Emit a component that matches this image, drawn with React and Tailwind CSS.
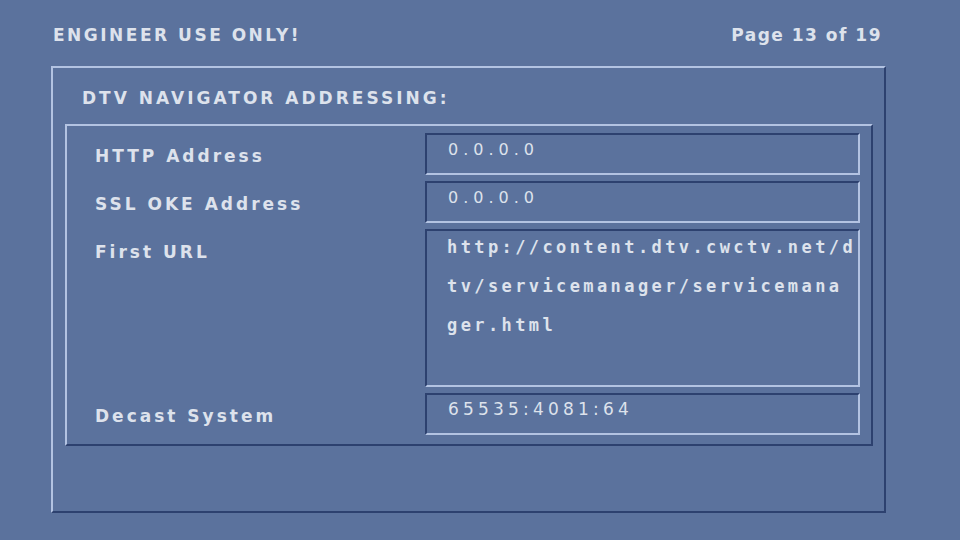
const FIELDS = [
  { label: "HTTP Address", lines: ["0.0.0.0"], kind: "ip" },
  { label: "SSL OKE Address", lines: ["0.0.0.0"], kind: "ip" },
  {
    label: "First URL",
    lines: [
      "http://content.dtv.cwctv.net/d",
      "tv/servicemanager/servicemana",
      "ger.html",
    ],
    kind: "url",
  },
  { label: "Decast System", lines: ["65535:4081:64"], kind: "num" },
];

const raised =
  "border-2 border-t-[#b3c3e2] border-l-[#b3c3e2] border-r-[#2d416f] border-b-[#2d416f]";
const sunken =
  "border-2 border-t-[#2d416f] border-l-[#2d416f] border-r-[#b3c3e2] border-b-[#b3c3e2]";

function FieldValue({ field }) {
  if (field.kind === "url") {
    return (
      <div className="pl-[20px] -mt-[3px] font-['DejaVu_Sans_Mono',monospace] font-bold text-[17px] tracking-[3.4px] leading-[39px]">
        {field.lines.map((line) => (
          <div key={line} className="whitespace-nowrap">
            {line}
          </div>
        ))}
      </div>
    );
  }

  const size =
    field.kind === "ip"
      ? "text-[16px] tracking-[5px] pt-[3px]"
      : "text-[17px] tracking-[4.2px] pt-[2px]";

  return <div className={`pl-[21px] leading-[24px] ${size}`}>{field.lines[0]}</div>;
}

export default function App() {
  return (
    <div className="w-[960px] h-[540px] bg-[#5b729d] text-[#dde2ec] font-['DejaVu_Sans',sans-serif] overflow-hidden">
      <div className="flex justify-between pl-[53px] pr-[78px] pt-[23px] h-[66px] text-[17px] font-bold">
        <span className="tracking-[2.5px]">ENGINEER USE ONLY!</span>
        <span className="tracking-[1.5px]">Page 13 of 19</span>
      </div>

      <div className={`ml-[51px] w-[835px] h-[447px] ${raised}`}>
        <div className="pl-[29px] pt-[18px] h-[56px] text-[17px] font-bold tracking-[3px]">
          DTV NAVIGATOR ADDRESSING:
        </div>

        <div
          className={`ml-[12px] w-[808px] pt-[7px] pb-[9px] pr-[11px] flex flex-col gap-[6px] ${raised}`}
        >
          {FIELDS.map((field) => (
            <div key={field.label} className="flex">
              <div className="w-[358px] pl-[28px] pt-[11px] text-[17px] font-bold tracking-[3px] leading-[24px]">
                {field.label}
              </div>
              <div
                className={`flex-1 ${field.kind === "url" ? "h-[158px]" : "h-[42px]"} ${sunken}`}
              >
                <FieldValue field={field} />
              </div>
            </div>
          ))}
        </div>
      </div>
    </div>
  );
}
